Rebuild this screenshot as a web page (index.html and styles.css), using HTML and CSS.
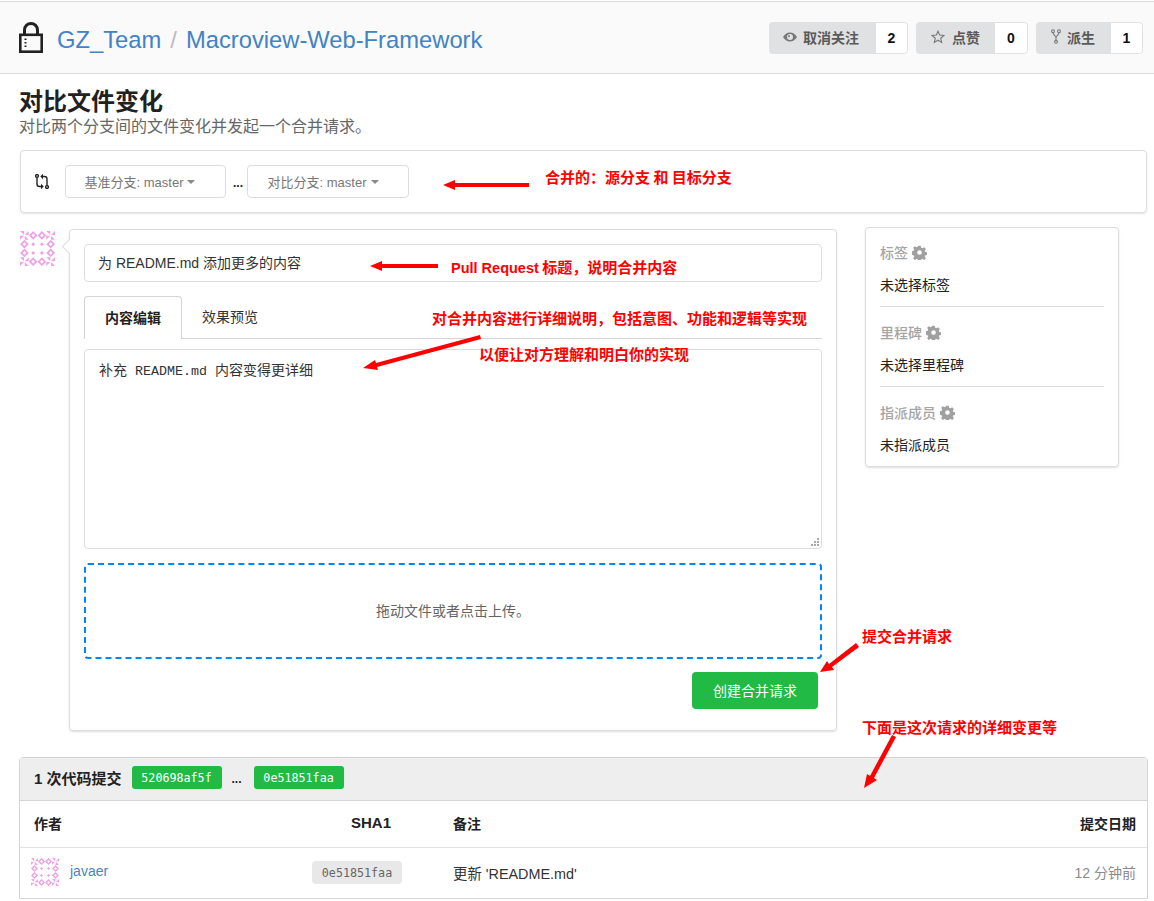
FILE: index.html
```html
<!DOCTYPE html>
<html lang="zh-CN">
<head>
<meta charset="utf-8">
<title>对比文件变化</title>
<link rel="stylesheet" href="styles.css">
</head>
<body>
<svg class="defs" width="0" height="0" aria-hidden="true">
  <defs>
    <path id="pw" d="M0 0h4v4zM8.750 0v4h-4zM8.750 8.750h-4v-4zM0 8.750v-4h4z"/>
    <path id="ring" fill-rule="evenodd" d="M4.400 0l4.400 4.400-4.400 4.400L0 4.400zM4.400 2.600L2.600 4.400l1.800 1.800 1.800-1.800z"/>
    <path id="dot" d="M4.400 2.400l2 2-2 2-2-2z"/>
    <symbol id="identicon" viewBox="0 0 35 35">
      <g fill="#eea3e6">
        <use href="#pw" x="0" y="0"/><use href="#pw" x="26.250" y="0"/>
        <use href="#pw" x="0" y="26.250"/><use href="#pw" x="26.250" y="26.250"/>
        <use href="#ring" x="8.750" y="0"/><use href="#ring" x="17.500" y="0"/>
        <use href="#ring" x="0" y="8.750"/><use href="#ring" x="26.250" y="8.750"/>
        <use href="#ring" x="0" y="17.500"/><use href="#ring" x="26.250" y="17.500"/>
        <use href="#ring" x="8.750" y="26.250"/><use href="#ring" x="17.500" y="26.250"/>
        <use href="#dot" x="8.750" y="8.750"/><use href="#dot" x="17.500" y="8.750"/>
        <use href="#dot" x="8.750" y="17.500"/><use href="#dot" x="17.500" y="17.500"/>
      </g>
    </symbol>
    <symbol id="gear" viewBox="0 0 14 14">
      <path fill="currentColor" fill-rule="evenodd" d="M5.700 0h2.600l.4 2 1.300.6 1.800-1.100 1.800 1.800-1.100 1.800.6 1.300 2 .4v2.600l-2 .4-.6 1.300 1.100 1.800-1.800 1.800-1.800-1.100-1.300.6-.4 2H5.700l-.4-2-1.300-.6-1.800 1.100-1.800-1.800 1.100-1.800-.6-1.300-2-.4V5.700l2-.4.6-1.300-1.100-1.800 1.800-1.800 1.800 1.100 1.300-.6zM7 4.600a2.400 2.400 0 1 0 0 4.800 2.400 2.400 0 0 0 0-4.800z" transform="translate(.7 .7) scale(.9)"/>
    </symbol>
  </defs>
</svg>

<header class="repo-header">
  <div class="repo-title">
    <svg class="lock-icon" width="24" height="31" viewBox="0 0 24 31">
      <path fill="none" stroke="#222" stroke-width="3" d="M5.500 13V8a6.500 6.500 0 0 1 13 0v5"/>
      <rect x="1.300" y="12.800" width="21.400" height="16.900" fill="none" stroke="#222" stroke-width="2.600"/>
      <path fill="#222" d="M5.500 16.500h2V18h-2zM5.500 20h2v1.500h-2zM5.500 23.500h2V25h-2z"/>
    </svg>
    <a class="repo-link" href="#">GZ_Team</a>
    <span class="repo-sep">/</span>
    <a class="repo-link" href="#">Macroview-Web-Framework</a>
  </div>
  <div class="repo-actions">
    <div class="action action-watch">
      <span class="action-label">
        <svg class="action-icon" width="14" height="14" viewBox="0 0 14 14"><path fill="#777" fill-rule="evenodd" d="M7 2.500c3 0 5.500 2 7 4.500-1.500 2.500-4 4.500-7 4.500S1.500 9.500 0 7c1.500-2.500 4-4.500 7-4.500zM7 4a3 3 0 1 0 0 6 3 3 0 0 0 0-6zM6 5.200a1 1 0 1 1 0 2 1 1 0 0 1 0-2z"/></svg>
        取消关注
      </span>
      <span class="action-count">2</span>
    </div>
    <div class="action action-star">
      <span class="action-label">
        <svg class="action-icon" width="14" height="14" viewBox="0 0 14 14"><path fill="none" stroke="#777" stroke-width="1.100" d="M7 1.200l1.700 3.900 4.200.4-3.200 2.800 1 4.100L7 10.200l-3.700 2.200 1-4.100L1.100 5.500l4.200-.4z"/></svg>
        点赞
      </span>
      <span class="action-count">0</span>
    </div>
    <div class="action action-fork">
      <span class="action-label">
        <svg class="action-icon fork-icon" width="10" height="15" viewBox="0 0 10 15"><g fill="none" stroke="#777" stroke-width="1.100"><circle cx="2" cy="2.200" r="1.400"/><circle cx="8" cy="2.200" r="1.400"/><circle cx="5" cy="12.800" r="1.400"/><path d="M2 3.600c0 2.800 3 2.800 3 5.200v2.600M8 3.600c0 2.800-3 2.800-3 5.200"/></g></svg>
        派生
      </span>
      <span class="action-count">1</span>
    </div>
  </div>
</header>

<main class="page">
  <h1 class="page-title">对比文件变化</h1>
  <p class="page-sub">对比两个分支间的文件变化并发起一个合并请求。</p>

  <section class="branch-box">
    <svg class="pr-icon" width="14" height="15" viewBox="0 0 14 15"><g fill="none" stroke="#222" stroke-width="1.400"><circle cx="2" cy="2" r="1.400"/><circle cx="12" cy="13" r="1.400"/><path d="M2 3.400V10c0 1.600.9 2.500 2.500 2.500h2M12 11.600V5c0-1.600-.9-2.500-2.500-2.500h-2"/></g><path fill="#222" d="M6 9.800v5.400l2.700-2.700zM8 -.2v5.400L5.300 2.500z"/></svg>
    <div class="branch-select">基准分支: master<i class="caret"></i></div>
    <span class="dots">...</span>
    <div class="branch-select branch-select-b">对比分支: master<i class="caret"></i></div>
  </section>

  <section class="compose">
    <svg class="avatar" width="35" height="35"><use href="#identicon"/></svg>
    <div class="form-card">
      <div class="title-input">为 README.md 添加更多的内容</div>
      <div class="tabs">
        <div class="tab tab-active">内容编辑</div>
        <div class="tab">效果预览</div>
      </div>
      <div class="textarea">
        <span>补充<span class="mono-latin"> README.md </span>内容变得更详细</span>
        <svg class="grip" width="9" height="9" viewBox="0 0 9 9"><path fill="#aaa" d="M7 1h2v2H7zM4 4h2v2H4zM7 4h2v2H7zM1 7h2v2H1zM4 7h2v2H4zM7 7h2v2H7z"/></svg>
      </div>
      <div class="dropzone">拖动文件或者点击上传。</div>
      <div class="form-actions"><button class="create-btn" type="button">创建合并请求</button></div>
    </div>
    <aside class="side-card">
      <div class="side-block">
        <div class="side-head">标签 <svg class="gear" width="15" height="15"><use href="#gear"/></svg></div>
        <div class="side-value">未选择标签</div>
      </div>
      <div class="side-block">
        <div class="side-head">里程碑 <svg class="gear" width="15" height="15"><use href="#gear"/></svg></div>
        <div class="side-value">未选择里程碑</div>
      </div>
      <div class="side-block">
        <div class="side-head">指派成员 <svg class="gear" width="15" height="15"><use href="#gear"/></svg></div>
        <div class="side-value">未指派成员</div>
      </div>
    </aside>
  </section>

  <section class="commits">
    <div class="commits-head">
      <strong class="commits-count">1 次代码提交</strong>
      <span class="sha-green">520698af5f</span>
      <span class="dots dots-b">...</span>
      <span class="sha-green">0e51851faa</span>
    </div>
    <table class="commits-table">
      <thead>
        <tr>
          <th class="col-author">作者</th>
          <th class="col-sha head-sha">SHA1</th>
          <th class="col-msg">备注</th>
          <th class="col-date">提交日期</th>
        </tr>
      </thead>
      <tbody>
        <tr>
          <td class="col-author"><div class="author"><svg class="avatar-sm" width="28" height="28"><use href="#identicon"/></svg><a href="#">javaer</a></div></td>
          <td class="col-sha"><span class="sha-grey">0e51851faa</span></td>
          <td class="col-msg msg-cell">更新 'README.md'</td>
          <td class="col-date date-cell">12 分钟前</td>
        </tr>
      </tbody>
    </table>
  </section>
</main>

<svg class="arrows" width="1154" height="901" viewBox="0 0 1154 901" aria-hidden="true">
  <g fill="#f00">
    <path d="M443 185l12-5v3h74v4h-74v3z"/>
    <path d="M370 266l12-5v3h56v4h-56v3z"/>
    <path d="M363 368l12-8 1 3 104-28 1 4-104 28 1 3z"/>
    <path d="M820 672l7-11 2 3 27-21 3 4-27 20 2 3z"/>
    <path d="M864 788l3-14 3 2 22-41 4 2-22 41 3 2z"/>
  </g>
</svg>
<div class="note note-1">合并的：源分支 和 目标分支</div>
<div class="note note-2"><span class="note-latin">Pull Request</span> 标题，说明合并内容</div>
<div class="note note-3">对合并内容进行详细说明，包括意图、功能和逻辑等实现</div>
<div class="note note-4">以便让对方理解和明白你的实现</div>
<div class="note note-5">提交合并请求</div>
<div class="note note-6">下面是这次请求的详细变更等</div>
</body>
</html>
```

FILE: styles.css
```css
* { box-sizing: border-box; }
html, body { margin: 0; padding: 0; }
body {
  position: relative;
  width: 1154px;
  height: 901px;
  overflow: hidden;
  padding-top: 1px;
  background: #fff;
  color: #212121;
  font-family: "Liberation Sans", "Noto Sans CJK SC", sans-serif;
  font-size: 14px;
}
a { text-decoration: none; color: #4b83c3; }
.defs { position: absolute; }

.repo-header {
  height: 73px;
  background: #fafafa;
  border-top: 1px solid #ddd;
  border-bottom: 1px solid #ddd;
  display: flex;
  align-items: center;
  justify-content: space-between;
  padding: 0 11px 1px 19px;
}
.repo-title { display: flex; align-items: center; padding-top: 5px; font-size: 23.750px; line-height: 30px; }
.lock-icon { margin-right: 14px; margin-top: -5px; }
.repo-link { color: #4183c4; }
.repo-sep { color: #bbb; margin: 0 9px; }
.repo-actions { display: flex; gap: 8px; margin-top: 2px; }
.action { display: flex; height: 32px; border-radius: 4px; overflow: hidden; font-size: 14px; font-weight: 700; }
.action-label {
  display: flex; align-items: center; background: #e0e1e2; color: #5a5a5a;
  padding: 0 0 3px 14px; gap: 6px;
}
.action-count {
  width: 32px; display: flex; align-items: center; justify-content: center;
  background: #fff; color: #111; font-size: 14px; padding-bottom: 1px;
  border: 1px solid #e0e1e2; border-left: 0; border-radius: 0 4px 4px 0;
}
.action-watch .action-label { width: 107px; }
.action-star .action-label { width: 79px; padding-left: 15px; gap: 7px; }
.action-star .action-count { width: 33px; }
.action-fork .action-label { width: 75px; padding-left: 15px; gap: 6px; }

.page { padding: 0 6px 0 19px; }
.page-title { margin: 14px 0 0 0; font-size: 24px; line-height: 28px; font-weight: 700; color: #212121; }
.page-sub { margin: 2px 0 0 0; font-size: 16px; line-height: 18px; color: #666; }

.branch-box {
  margin: 14px 0 0 1px;
  height: 63px;
  width: 1127px;
  display: flex;
  align-items: center;
  padding: 0 0 0 14px;
  border: 1px solid #ddd;
  border-radius: 4px;
  box-shadow: 0 1px 2px rgba(34, 36, 38, .12);
}
.pr-icon { margin-right: 16px; }
.branch-select {
  width: 161px; height: 33px;
  display: flex; align-items: center; justify-content: center;
  padding: 0 11px 1px 0;
  border: 1px solid #ddd; border-radius: 4px;
  font-size: 13px; color: #777;
}
.branch-select-b { width: 162px; padding-right: 10px; }
.caret {
  display: inline-block; margin-left: 4px; margin-top: 1px;
  border-left: 4px solid transparent; border-right: 4px solid transparent; border-top: 4px solid #888;
}
.dots { color: #222; font-weight: 700; font-size: 12px; margin: 0 4px 0 7px; padding-top: 3px; }

.compose { display: flex; align-items: flex-start; margin-top: 14px; margin-left: 1px; }
.avatar { margin-top: 4px; flex: none; }
.form-card {
  position: relative;
  width: 768px; height: 502px;
  margin: 2px 28px 0 14px;
  padding: 14px;
  border: 1px solid #ddd;
  border-radius: 4px;
  box-shadow: 0 1px 2px rgba(34, 36, 38, .15);
}
.form-card::before {
  content: "";
  position: absolute;
  left: -6px; top: 11px;
  width: 10px; height: 10px;
  background: #fff;
  border-left: 1px solid #ddd;
  border-bottom: 1px solid #ddd;
  transform: rotate(45deg);
}
.title-input {
  height: 38px; display: flex; align-items: center;
  padding: 0 0 2px 13px;
  border: 1px solid #ddd; border-radius: 4px;
  font-size: 14px; color: #333;
}
.tabs { display: flex; height: 43px; margin-top: 14px; border-bottom: 1px solid #d4d4d5; }
.tab { width: 98px; display: flex; align-items: center; justify-content: center; padding-bottom: 2px; color: #333; font-size: 14px; }
.tab-active {
  height: 43px; font-weight: 700; color: #222; background: #fff;
  border: 1px solid #d4d4d5; border-bottom: 0; border-radius: 4px 4px 0 0;
}
.tab + .tab { width: 96px; margin-left: 0; }
.textarea {
  position: relative;
  height: 200px; margin-top: 10px;
  padding: 12px 14px;
  border: 1px solid #ddd; border-radius: 4px;
  font-family: "Liberation Mono", "Noto Sans CJK SC", monospace;
  font-size: 14px; line-height: 18px; color: #333;
}
.mono-latin { font-size: 13.330px; }
.grip { position: absolute; right: 2px; bottom: 2px; }
.dropzone {
  height: 96px; margin-top: 14px;
  display: flex; align-items: center; justify-content: center;
  padding-bottom: 2px;
  border: 2px dashed #0087f7; border-radius: 4px;
  font-size: 14px; color: #646464;
}
.form-actions { display: flex; justify-content: flex-end; margin-top: 13px; padding-right: 4px; }
.create-btn {
  width: 126px; height: 37px; padding: 0 0 2px;
  background: #21ba45; color: #fff; border: 0; border-radius: 4px;
  font: 400 14px "Liberation Sans", "Noto Sans CJK SC", sans-serif;
}

.side-card {
  width: 254px; height: 240px;
  padding: 0 14px;
  border: 1px solid #ddd; border-radius: 4px;
  box-shadow: 0 1px 2px rgba(34, 36, 38, .15);
}
.side-block { height: 80px; padding-top: 16px; border-bottom: 1px solid #ddd; }
.side-block:first-child { height: 79px; padding-top: 15px; }
.side-block:last-child { border-bottom: 0; }
.side-head { display: flex; align-items: center; gap: 4px; height: 18px; font-size: 14px; font-weight: 500; color: #a5a5a5; }
.gear { color: #a0a0a0; }
.side-value { margin-top: 15px; line-height: 18px; color: #222; font-size: 14px; }

.commits {
  margin-top: 26px;
  width: 1129px;
  border: 1px solid #d4d4d5; border-radius: 4px 4px 0 0;
}
.commits-head {
  height: 43px; display: flex; align-items: center;
  padding: 0 0 3px 14px;
  background: #eee;
  border-bottom: 1px solid #d4d4d5;
}
.commits-count { font-size: 15px; color: #222; margin-right: 10px; }
.sha-green {
  width: 90px; height: 23px; display: flex; align-items: center; justify-content: center;
  background: #21ba45; color: #fff; border-radius: 3px;
  font-family: "DejaVu Sans Mono", monospace; font-size: 11.700px;
}
.dots-b { margin: 0 12px 0 10px; padding-top: 2px; }
.commits-table { width: 100%; border-collapse: collapse; table-layout: fixed; }
.commits-table th { height: 46px; padding: 0 0 2px; font-size: 14px; font-weight: 700; color: #222; border-bottom: 1px solid #e2e2e2; text-align: left; }
.commits-table td { height: 51px; padding: 0 0 1px; font-size: 14px; color: #333; }
.col-author { width: 292px; padding-left: 14px !important; }
.col-sha { width: 90px; text-align: center !important; }
.commits-table .head-sha { font-size: 15px; padding-left: 28px; white-space: nowrap; }
.col-msg { padding-left: 51px !important; }
.col-date { width: 200px; text-align: right !important; padding-right: 11px !important; }
.commits-table .msg-cell { font-size: 14.400px; }
.date-cell { color: #8a8a8a !important; }
.author { display: flex; align-items: center; margin-left: -3px; gap: 11px; font-size: 14px; }
.author a { margin-top: -3px; color: #4b83c3; }
.sha-grey {
  display: inline-block; width: 90px; height: 23px; line-height: 24px;
  background: #e8e8e8; color: #666; border-radius: 4px;
  font-family: "DejaVu Sans Mono", monospace; font-size: 11.700px;
}

.arrows { position: absolute; left: 0; top: 0; pointer-events: none; }
.note {
  position: absolute;
  white-space: nowrap;
  color: #f00;
  font-size: 15px;
  line-height: 18px;
  font-weight: 700;
  font-family: "Noto Sans CJK SC", sans-serif;
}
.note-latin { font-family: "Liberation Sans", sans-serif; font-size: 14.500px; }
.note-1 { left: 545px; top: 168px; }
.note-2 { left: 451px; top: 258px; }
.note-3 { left: 432px; top: 309px; }
.note-4 { left: 479px; top: 345px; }
.note-5 { left: 862px; top: 627px; }
.note-6 { left: 862px; top: 718px; }
```
